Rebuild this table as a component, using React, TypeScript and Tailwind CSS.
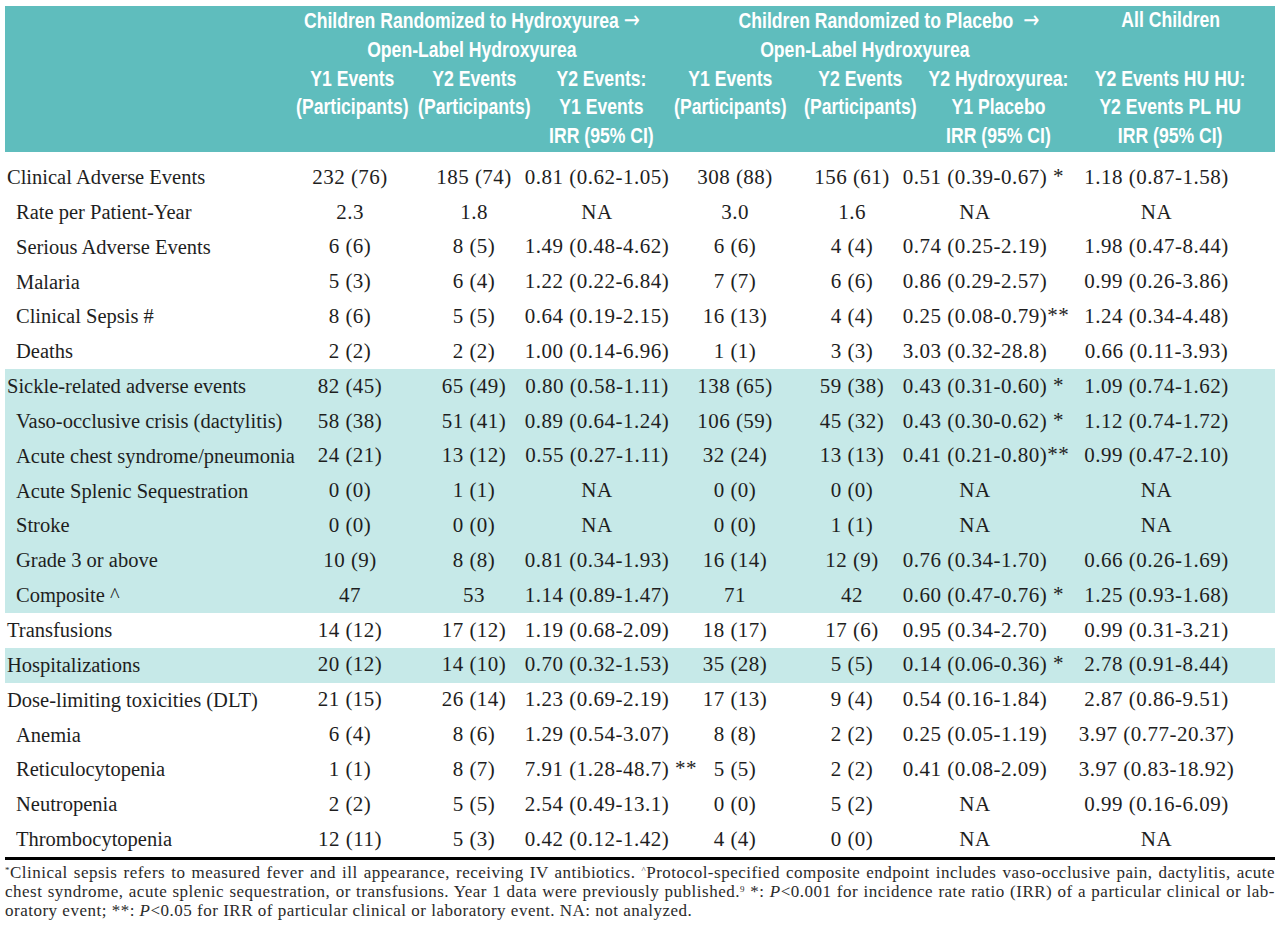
import React from "react";

type Row = {
  label: string;
  sub?: boolean;
  shade?: boolean;
  cells: string[];
};

const rows: Row[] = [
  { label: "Clinical Adverse Events", cells: ["232 (76)", "185 (74)", "0.81 (0.62-1.05)", "308 (88)", "156 (61)", "0.51 (0.39-0.67)| *", "1.18 (0.87-1.58)"] },
  { label: "Rate per Patient-Year", sub: true, cells: ["2.3", "1.8", "NA", "3.0", "1.6", "NA", "NA"] },
  { label: "Serious Adverse Events", sub: true, cells: ["6 (6)", "8 (5)", "1.49 (0.48-4.62)", "6 (6)", "4 (4)", "0.74 (0.25-2.19)", "1.98 (0.47-8.44)"] },
  { label: "Malaria", sub: true, cells: ["5 (3)", "6 (4)", "1.22 (0.22-6.84)", "7 (7)", "6 (6)", "0.86 (0.29-2.57)", "0.99 (0.26-3.86)"] },
  { label: "Clinical Sepsis #", sub: true, cells: ["8 (6)", "5 (5)", "0.64 (0.19-2.15)", "16 (13)", "4 (4)", "0.25 (0.08-0.79)|**", "1.24 (0.34-4.48)"] },
  { label: "Deaths", sub: true, cells: ["2 (2)", "2 (2)", "1.00 (0.14-6.96)", "1 (1)", "3 (3)", "3.03 (0.32-28.8)", "0.66 (0.11-3.93)"] },
  { label: "Sickle-related adverse events", shade: true, cells: ["82 (45)", "65 (49)", "0.80 (0.58-1.11)", "138 (65)", "59 (38)", "0.43 (0.31-0.60)| *", "1.09 (0.74-1.62)"] },
  { label: "Vaso-occlusive crisis (dactylitis)", sub: true, shade: true, cells: ["58 (38)", "51 (41)", "0.89 (0.64-1.24)", "106 (59)", "45 (32)", "0.43 (0.30-0.62)| *", "1.12 (0.74-1.72)"] },
  { label: "Acute chest syndrome/pneumonia", sub: true, shade: true, cells: ["24 (21)", "13 (12)", "0.55 (0.27-1.11)", "32 (24)", "13 (13)", "0.41 (0.21-0.80)|**", "0.99 (0.47-2.10)"] },
  { label: "Acute Splenic Sequestration", sub: true, shade: true, cells: ["0 (0)", "1 (1)", "NA", "0 (0)", "0 (0)", "NA", "NA"] },
  { label: "Stroke", sub: true, shade: true, cells: ["0 (0)", "0 (0)", "NA", "0 (0)", "1 (1)", "NA", "NA"] },
  { label: "Grade 3 or above", sub: true, shade: true, cells: ["10 (9)", "8 (8)", "0.81 (0.34-1.93)", "16 (14)", "12 (9)", "0.76 (0.34-1.70)", "0.66 (0.26-1.69)"] },
  { label: "Composite ^", sub: true, shade: true, cells: ["47", "53", "1.14 (0.89-1.47)", "71", "42", "0.60 (0.47-0.76)| *", "1.25 (0.93-1.68)"] },
  { label: "Transfusions", cells: ["14 (12)", "17 (12)", "1.19 (0.68-2.09)", "18 (17)", "17 (6)", "0.95 (0.34-2.70)", "0.99 (0.31-3.21)"] },
  { label: "Hospitalizations", shade: true, cells: ["20 (12)", "14 (10)", "0.70 (0.32-1.53)", "35 (28)", "5 (5)", "0.14 (0.06-0.36)| *", "2.78 (0.91-8.44)"] },
  { label: "Dose-limiting toxicities (DLT)", cells: ["21 (15)", "26 (14)", "1.23 (0.69-2.19)", "17 (13)", "9 (4)", "0.54 (0.16-1.84)", "2.87 (0.86-9.51)"] },
  { label: "Anemia", sub: true, cells: ["6 (4)", "8 (6)", "1.29 (0.54-3.07)", "8 (8)", "2 (2)", "0.25 (0.05-1.19)", "3.97 (0.77-20.37)"] },
  { label: "Reticulocytopenia", sub: true, cells: ["1 (1)", "8 (7)", "7.91 (1.28-48.7)| **", "5 (5)", "2 (2)", "0.41 (0.08-2.09)", "3.97 (0.83-18.92)"] },
  { label: "Neutropenia", sub: true, cells: ["2 (2)", "5 (5)", "2.54 (0.49-13.1)", "0 (0)", "5 (2)", "NA", "0.99 (0.16-6.09)"] },
  { label: "Thrombocytopenia", sub: true, cells: ["12 (11)", "5 (3)", "0.42 (0.12-1.42)", "4 (4)", "0 (0)", "NA", "NA"] },
];

// condensed bold header look: Liberation Sans squeezed horizontally
function Head({ children, className = "" }: { children: React.ReactNode; className?: string }) {
  return (
    <div className={`flex flex-col items-center ${className}`}>
      <div className="scale-x-[0.8] whitespace-pre text-center">{children}</div>
    </div>
  );
}

const Arrow = () => <span className="font-['DejaVu_Sans',sans-serif] font-normal text-[24px]">→</span>;

function Cell({ value }: { value: string }) {
  const [main, mark] = value.split("|");
  return (
    <div className="flex justify-center whitespace-nowrap">
      <span className="relative">
        {main}
        {mark && <span className="absolute left-full top-[-1px] whitespace-pre">{mark}</span>}
      </span>
    </div>
  );
}

const cellPad = ["", "", "", "", "", "pl-[30px]", "pl-[10px]"];

export default function App() {
  return (
    <div className="w-[1280px] h-[937px] bg-white text-[#1e1e1e] overflow-hidden">
      {/* header band */}
      <div className="mx-[5px] mt-[6px] h-[146px] bg-[#5fbdbd] text-white text-[22px] leading-[28.8px] font-['Liberation_Sans',Arial,sans-serif] font-bold">
        <div className="grid grid-cols-[285px_124px_120px_134px_124px_136px_140px_205px]">
          <div className="row-span-2" />
          <div className="col-span-3 flex flex-col items-center pr-[14px]">
            <Head>Children Randomized to Hydroxyurea <Arrow /></Head>
            <Head>Open-Label Hydroxyurea</Head>
          </div>
          <div className="col-span-3 flex flex-col items-center">
            <Head className="pl-[42px]">Children Randomized to Placebo  <Arrow /></Head>
            <Head className="pr-[6px]">Open-Label Hydroxyurea</Head>
          </div>
          <Head>All Children</Head>
          <Head>{"Y1 Events\n(Participants)"}</Head>
          <Head>{"Y2 Events\n(Participants)"}</Head>
          <Head>{"Y2 Events:\nY1 Events\nIRR (95% CI)"}</Head>
          <Head>{"Y1 Events\n(Participants)"}</Head>
          <Head>{"Y2 Events\n(Participants)"}</Head>
          <Head>{"Y2 Hydroxyurea:\nY1 Placebo\nIRR (95% CI)"}</Head>
          <Head>{"Y2 Events HU HU:\nY2 Events PL HU\nIRR (95% CI)"}</Head>
        </div>
      </div>

      {/* body rows */}
      <div className="mx-[5px] pt-[8px] font-['Liberation_Serif',serif] text-[20.5px]">
        {rows.map((r) => (
          <div
            key={r.label}
            className={`grid h-[34.85px] items-center grid-cols-[285px_120px_128px_118px_158px_76px_140px_243px] ${r.shade ? "bg-[#c6e9e8]" : ""}`}
          >
            <div className={`whitespace-nowrap ${r.sub ? "pl-[11px]" : "pl-[2px]"}`}>{r.label}</div>
            {r.cells.map((c, i) => (
              <div key={i} className={`text-[21px] tracking-[0.5px] ${cellPad[i]}`}>
                <Cell value={c} />
              </div>
            ))}
          </div>
        ))}
        <div className="h-[3px] bg-black" />
      </div>

      {/* footnotes */}
      <div className="mx-[5px] pt-[3px] font-['Liberation_Serif',serif] text-[17px] tracking-[0.5px] leading-[19px] text-[#2a2a2a]">
        <div className="text-justify [text-align-last:justify] whitespace-nowrap">
          <sup className="text-[9px]">*</sup>Clinical sepsis refers to measured fever and ill appearance, receiving IV antibiotics.{" "}
          <sup className="text-[9px]">^</sup>Protocol-specified composite endpoint includes vaso-occlusive pain, dactylitis, acute
        </div>
        <div className="text-justify [text-align-last:justify] whitespace-nowrap">
          chest syndrome, acute splenic sequestration, or transfusions. Year 1 data were previously published.
          <sup className="text-[9px]">9</sup> *: <i>P</i>&lt;0.001 for incidence rate ratio (IRR) of a particular clinical or lab-
        </div>
        <div>
          oratory event; **: <i>P</i>&lt;0.05 for IRR of particular clinical or laboratory event. NA: not analyzed.
        </div>
      </div>
    </div>
  );
}
